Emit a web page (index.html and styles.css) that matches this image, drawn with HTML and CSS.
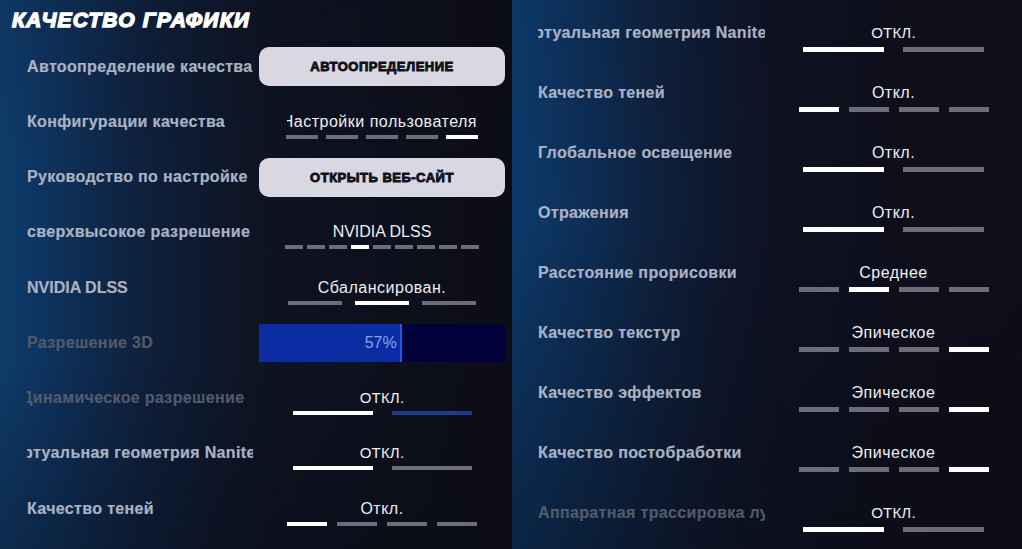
FILE: index.html
```html
<!DOCTYPE html>
<html lang="ru">
<head>
<meta charset="utf-8">
<title>Качество графики</title>
<link rel="stylesheet" href="styles.css">
</head>
<body>
<div class="screen">
  <section class="panel panel-left">
    <h1 class="title">КАЧЕСТВО ГРАФИКИ</h1>

    <div class="row">
      <div class="label"><span>Автоопределение качества</span></div>
      <div class="value"><div class="btn">АВТООПРЕДЕЛЕНИЕ</div></div>
    </div>

    <div class="row">
      <div class="label"><span>Конфигурации качества</span></div>
      <div class="value stack">
        <div class="vtext clip-l"><span>Настройки пользователя</span></div>
        <div class="bars b5"><i class="bar"></i><i class="bar"></i><i class="bar"></i><i class="bar"></i><i class="bar on"></i></div>
      </div>
    </div>

    <div class="row">
      <div class="label"><span>Руководство по настройке</span></div>
      <div class="value"><div class="btn">ОТКРЫТЬ ВЕБ-САЙТ</div></div>
    </div>

    <div class="row">
      <div class="label"><span>сверхвысокое разрешение</span></div>
      <div class="value stack">
        <div class="vtext latin">NVIDIA DLSS</div>
        <div class="bars b9"><i class="bar"></i><i class="bar"></i><i class="bar"></i><i class="bar on"></i><i class="bar"></i><i class="bar"></i><i class="bar"></i><i class="bar"></i><i class="bar"></i></div>
      </div>
    </div>

    <div class="row">
      <div class="label latin"><span>NVIDIA DLSS</span></div>
      <div class="value stack">
        <div class="vtext">Сбалансирован.</div>
        <div class="bars b3"><i class="bar"></i><i class="bar on"></i><i class="bar"></i></div>
      </div>
    </div>

    <div class="row">
      <div class="label dim"><span>Разрешение 3D</span></div>
      <div class="value">
        <div class="slider"><div class="fill" style="width:58%">57%</div></div>
      </div>
    </div>

    <div class="row">
      <div class="label dim cut-d"><span>Динамическое разрешение</span></div>
      <div class="value stack">
        <div class="vtext caps">ОТКЛ.</div>
        <div class="bars b2"><i class="bar on"></i><i class="bar blue"></i></div>
      </div>
    </div>

    <div class="row">
      <div class="label cut-v"><span>Виртуальная геометрия Nanite</span></div>
      <div class="value stack">
        <div class="vtext caps">ОТКЛ.</div>
        <div class="bars b2"><i class="bar on"></i><i class="bar"></i></div>
      </div>
    </div>

    <div class="row">
      <div class="label"><span>Качество теней</span></div>
      <div class="value stack">
        <div class="vtext">Откл.</div>
        <div class="bars b4"><i class="bar on"></i><i class="bar"></i><i class="bar"></i><i class="bar"></i></div>
      </div>
    </div>
  </section>

  <section class="panel panel-right">
    <div class="row-r">
      <div class="label cut-v"><span>Виртуальная геометрия Nanite</span></div>
      <div class="value stack">
        <div class="vtext caps">ОТКЛ.</div>
        <div class="bars b2r"><i class="bar on"></i><i class="bar"></i></div>
      </div>
    </div>

    <div class="row-r">
      <div class="label"><span>Качество теней</span></div>
      <div class="value stack">
        <div class="vtext">Откл.</div>
        <div class="bars b4"><i class="bar on"></i><i class="bar"></i><i class="bar"></i><i class="bar"></i></div>
      </div>
    </div>

    <div class="row-r">
      <div class="label"><span>Глобальное освещение</span></div>
      <div class="value stack">
        <div class="vtext">Откл.</div>
        <div class="bars b2r"><i class="bar on"></i><i class="bar"></i></div>
      </div>
    </div>

    <div class="row-r">
      <div class="label"><span>Отражения</span></div>
      <div class="value stack">
        <div class="vtext">Откл.</div>
        <div class="bars b2r"><i class="bar on"></i><i class="bar"></i></div>
      </div>
    </div>

    <div class="row-r">
      <div class="label"><span>Расстояние прорисовки</span></div>
      <div class="value stack">
        <div class="vtext">Среднее</div>
        <div class="bars b4"><i class="bar"></i><i class="bar on"></i><i class="bar"></i><i class="bar"></i></div>
      </div>
    </div>

    <div class="row-r">
      <div class="label"><span>Качество текстур</span></div>
      <div class="value stack">
        <div class="vtext">Эпическое</div>
        <div class="bars b4"><i class="bar"></i><i class="bar"></i><i class="bar"></i><i class="bar on"></i></div>
      </div>
    </div>

    <div class="row-r">
      <div class="label"><span>Качество эффектов</span></div>
      <div class="value stack">
        <div class="vtext">Эпическое</div>
        <div class="bars b4"><i class="bar"></i><i class="bar"></i><i class="bar"></i><i class="bar on"></i></div>
      </div>
    </div>

    <div class="row-r">
      <div class="label"><span>Качество постобработки</span></div>
      <div class="value stack">
        <div class="vtext">Эпическое</div>
        <div class="bars b4"><i class="bar"></i><i class="bar"></i><i class="bar"></i><i class="bar on"></i></div>
      </div>
    </div>

    <div class="row-r">
      <div class="label dim"><span>Аппаратная трассировка лучей</span></div>
      <div class="value stack">
        <div class="vtext caps">ОТКЛ.</div>
        <div class="bars b2r"><i class="bar on"></i><i class="bar"></i></div>
      </div>
    </div>
  </section>
</div>
</body>
</html>
```

FILE: styles.css
```css
html, body {
  margin: 0;
  padding: 0;
  width: 1022px;
  height: 549px;
  overflow: hidden;
  background: #0e0f1c;
  font-family: "Liberation Sans", Arial, sans-serif;
}

.screen {
  display: flex;
  width: 1022px;
  height: 549px;
}

.panel {
  height: 549px;
  box-sizing: border-box;
}

.panel-left {
  width: 512px;
  background:
    linear-gradient(180deg, rgba(8, 10, 20, 0.1) 0%, rgba(8, 10, 20, 0) 30%, rgba(8, 10, 20, 0) 65%, rgba(8, 10, 20, 0.35) 100%),
    linear-gradient(90deg, #0f3c6a 0px, #0e3460 40px, #0e2a4e 90px, #0e1f3a 150px, #0e1729 220px, #0e111f 300px, #0d0f1b 420px, #0b0c16 512px);
}

.panel-right {
  width: 510px;
  padding-top: 3px;
  background:
    linear-gradient(180deg, rgba(8, 10, 20, 0.05) 0%, rgba(8, 10, 20, 0) 40%, rgba(8, 10, 20, 0.45) 100%),
    linear-gradient(90deg, #0c3a6a 0px, #0d3563 30px, #0d2c53 80px, #0e213e 140px, #0e182d 200px, #0e1222 270px, #0e0f1c 360px, #0e0e19 510px);
}

.title {
  margin: 0;
  height: 39px;
  box-sizing: border-box;
  padding: 7px 0 0 12px;
  font-size: 21px;
  line-height: 26px;
  font-weight: 700;
  font-style: italic;
  letter-spacing: 1.2px;
  color: #ffffff;
  -webkit-text-stroke: 1.4px #ffffff;
}

.row {
  display: grid;
  grid-template-columns: 226px 246px;
  column-gap: 6px;
  align-items: center;
  height: 55.25px;
  padding-left: 27px;
}

.row-r {
  display: grid;
  grid-template-columns: 227px 197px;
  column-gap: 30px;
  align-items: center;
  height: 60px;
  padding-left: 26px;
}

.label {
  display: flex;
  overflow: hidden;
  white-space: nowrap;
  font-size: 16px;
  font-weight: 700;
  letter-spacing: 0.35px;
  line-height: 20px;
  color: #a9b2c3;
  -webkit-text-stroke: 0.2px #a9b2c3;
}

.label.latin {
  letter-spacing: 0;
}

.label span {
  flex: none;
}

.label.dim {
  color: #515a6b;
  -webkit-text-stroke: 0.2px #515a6b;
}

.label.cut-v span {
  margin-left: -26px;
}

.label.cut-d span {
  margin-left: -6px;
}

.value {
  display: flex;
  justify-content: center;
}

.stack {
  flex-direction: column;
  align-items: center;
  padding-top: 7px;
}

.row-r .stack {
  padding-top: 9px;
}

.vtext {
  font-size: 16px;
  line-height: 20px;
  letter-spacing: 0.5px;
  color: #eeeef3;
  white-space: nowrap;
}

.vtext.latin {
  letter-spacing: 0;
}

.vtext.caps {
  font-size: 15px;
  letter-spacing: 0.2px;
}

.vtext.clip-l {
  width: 190px;
  display: flex;
  justify-content: flex-end;
  overflow: hidden;
}

.vtext.clip-l span {
  flex: none;
}

.bars {
  display: flex;
  margin-top: 3px;
}

.row-r .bars {
  margin-top: 4px;
}

.bar {
  display: block;
  height: 4px;
  background: #6d6c7a;
}

.row-r .bar {
  height: 5px;
}

.bar.on {
  background: #ffffff;
}

.bar.blue {
  background: #1b3a90;
}

.b5 { gap: 8px; }
.b5 .bar { width: 32px; }

.b9 { gap: 4px; }
.b9 .bar { width: 18px; }

.b3 { gap: 13px; }
.b3 .bar { width: 54px; }

.b2 { gap: 19px; }
.b2 .bar { width: 80px; }

.b2r { gap: 19px; }
.b2r .bar { width: 81px; }

.b4 { gap: 10px; }
.b4 .bar { width: 40px; }

.btn {
  width: 246px;
  height: 39px;
  border-radius: 10px;
  background: #d9d7e2;
  display: flex;
  align-items: center;
  justify-content: center;
  font-size: 13px;
  font-weight: 700;
  letter-spacing: 0.5px;
  color: #111118;
  -webkit-text-stroke: 0.9px #111118;
}

.slider {
  width: 246px;
  height: 38px;
  background: #00003a;
  display: flex;
}

.fill {
  box-sizing: border-box;
  height: 38px;
  background: #0b2ca3;
  border-right: 2px solid #2059dc;
  display: flex;
  align-items: center;
  justify-content: flex-end;
  padding-right: 3px;
  font-size: 16px;
  color: #8fa1e6;
}
```
